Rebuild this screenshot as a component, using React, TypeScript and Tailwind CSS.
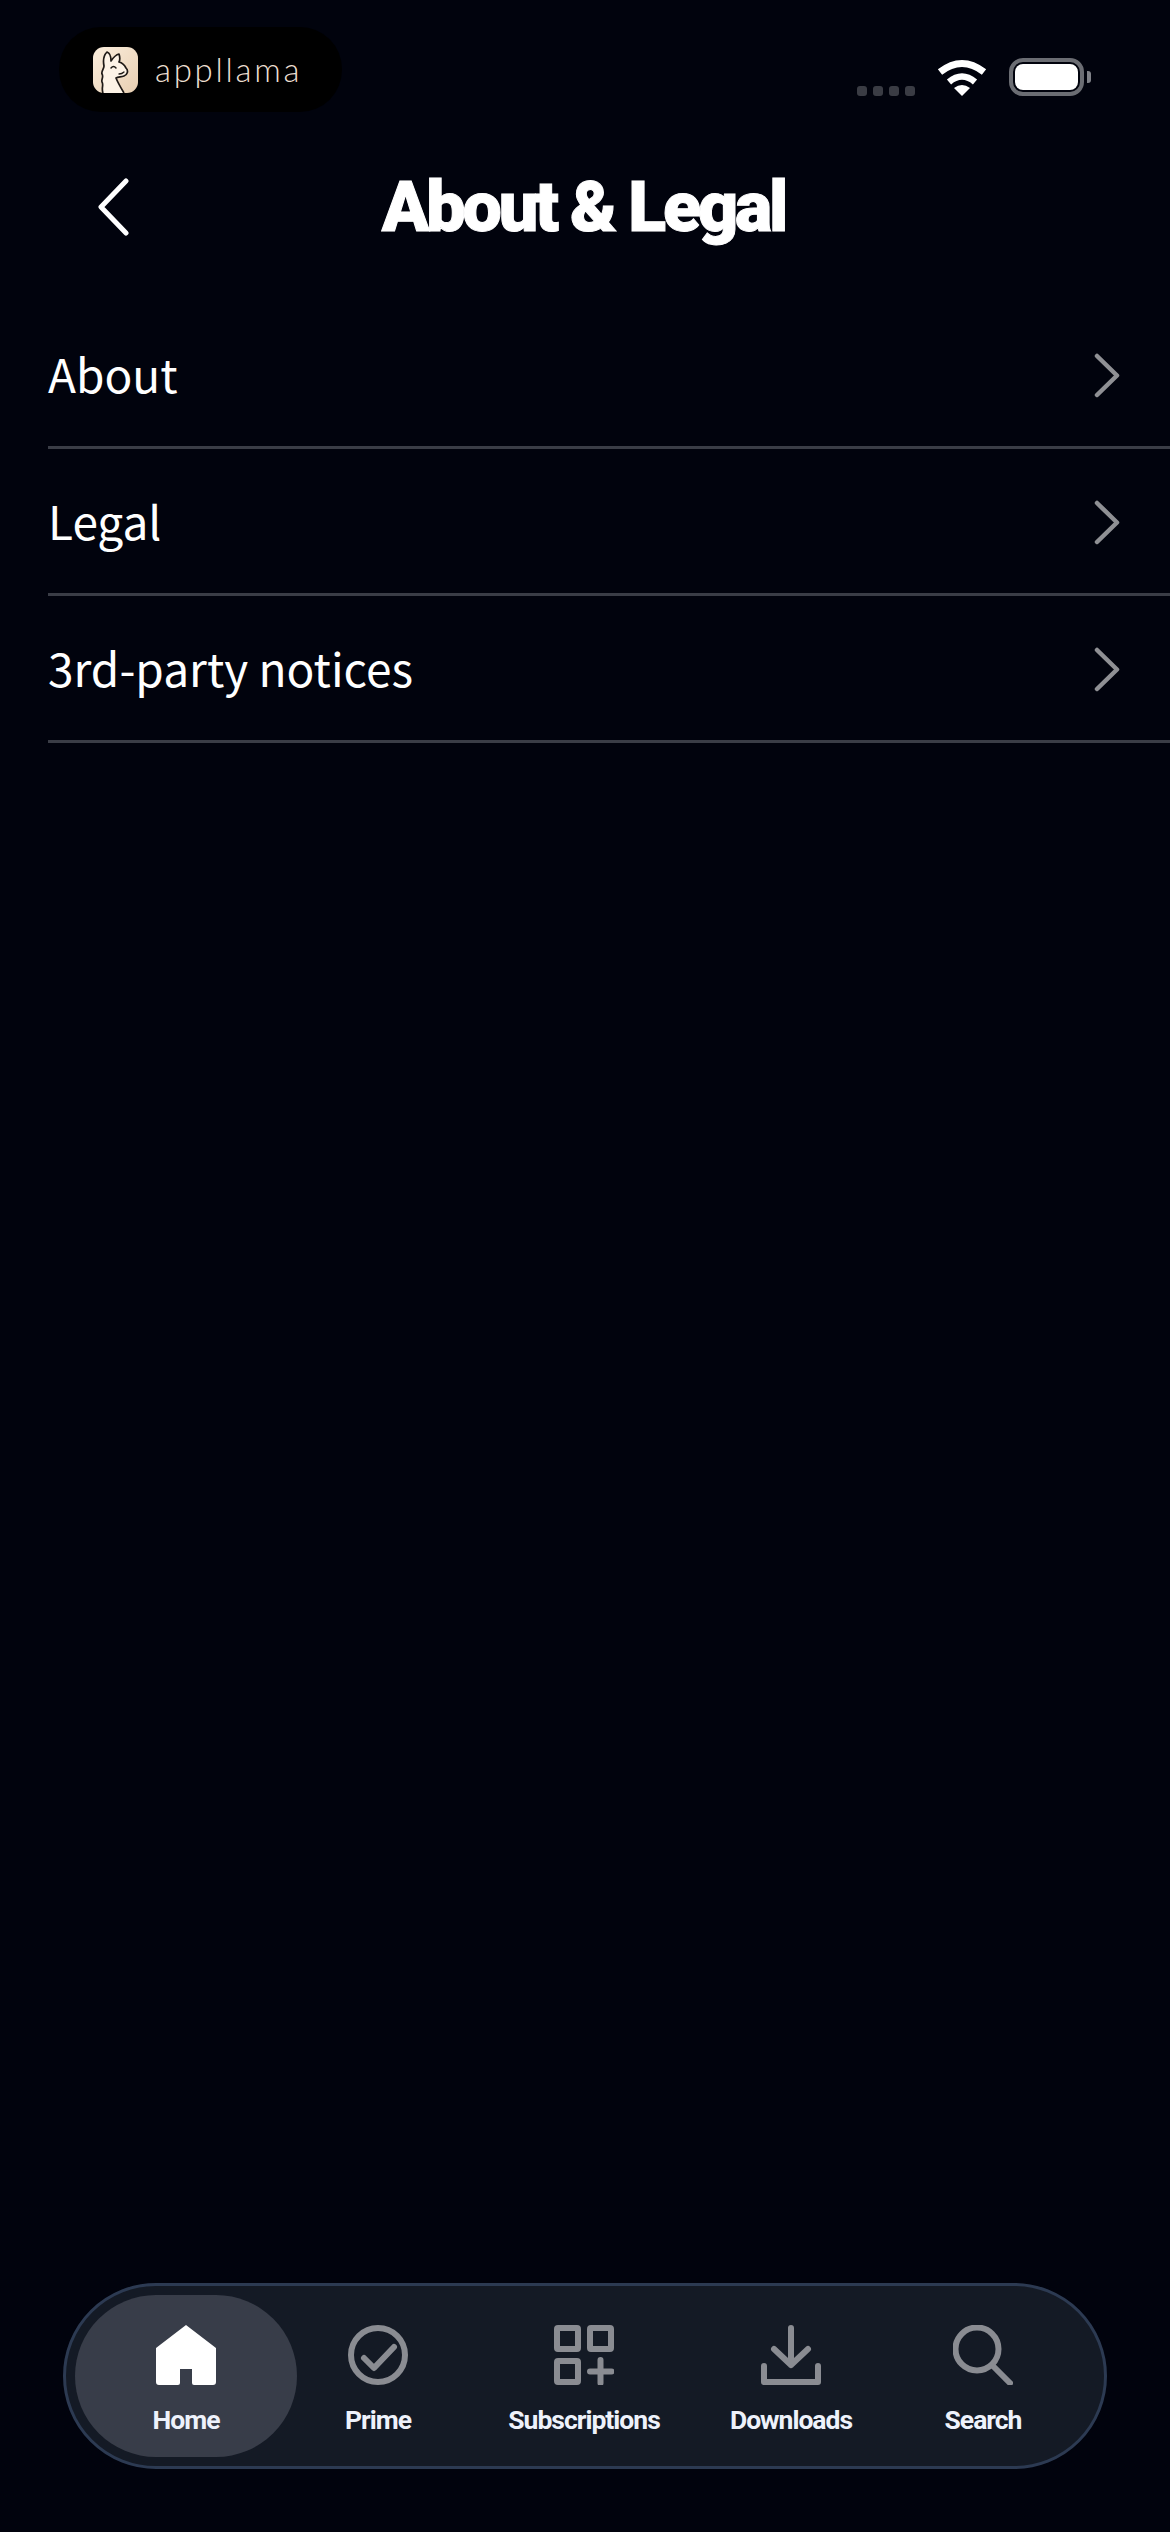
import React from "react";

const Chevron = () => (
  <svg width="26" height="45" viewBox="0 0 26 45" fill="none" className="block mt-[3px]">
    <path d="M3 3 L23 22.5 L3 42" stroke="#8f9094" strokeWidth="4.5" strokeLinecap="round" strokeLinejoin="round" />
  </svg>
);

const Row = ({ label }: { label: string }) => (
  <div className="ml-[48px] h-[147px] flex items-center justify-between border-b-[3px] border-[#3a3d46] pr-[50px]">
    <span className="text-[46px] leading-none text-white pb-[3px] font-['Noto_Sans_CJK_SC','Noto_Sans',sans-serif]">{label}</span>
    <Chevron />
  </div>
);

const Llama = () => (
  <svg width="45" height="46" viewBox="0 0 45 46" className="block shrink-0">
    <defs>
      <linearGradient id="lg" x1="0" y1="0" x2="1" y2="1">
        <stop offset="0" stopColor="#fbeedd" />
        <stop offset="1" stopColor="#e8cfb2" />
      </linearGradient>
    </defs>
    <rect width="45" height="46" rx="11" fill="url(#lg)" />
    <path
      d="M10 46 C8 41 11 38 9 35 C8 32 11 30 9 27 C8 24 11 22 11 19 C10 14 11 8 14 5 C17 6 18 11 18 14 C20 11 22 8 26 7 C27 10 27 13 26 15 C30 16 32 19 33 21 C36 24 34 28 31 29 C28 30 25 30 23 31 C25 36 28 41 31 46"
      fill="#fdf3e6"
      stroke="#1f1a16"
      strokeWidth="1.7"
      strokeLinejoin="round"
    />
    <path d="M18 21 Q20.5 18 23 21" fill="none" stroke="#1f1a16" strokeWidth="1.5" strokeLinecap="round" />
    <path d="M26 27 Q29 27 31 25" fill="none" stroke="#1f1a16" strokeWidth="1.3" strokeLinecap="round" />
  </svg>
);

const Wifi = () => (
  <svg width="50" height="37" viewBox="0 0 50 37" fill="none" className="block">
    <path d="M3 13 Q25 -4 47 13" stroke="#fff" strokeWidth="7" />
    <path d="M12 23 Q25 12 38 23" stroke="#fff" strokeWidth="6.5" />
    <path d="M17 29 Q25 23 33 29 L25 37 Z" fill="#fff" />
  </svg>
);

const Battery = () => (
  <div className="flex items-center">
    <div className="w-[75px] h-[38px] rounded-[14px] border-[4px] border-[#6b6d73] p-[2px]">
      <div className="w-full h-full rounded-[8px] bg-white" />
    </div>
    <div className="ml-[3px] w-[4px] h-[12px] rounded-r-[3px] bg-[#808288]" />
  </div>
);

const stroke = { stroke: "#8a8c92", strokeWidth: 6, fill: "none" };

const HomeIcon = () => (
  <svg width="60" height="60" viewBox="0 0 60 60" className="block">
    <path
      d="M30 0 L60 23 V57 Q60 60 57 60 H38 Q36 60 36 58 V44 H24 V58 Q24 60 22 60 H3 Q0 60 0 57 V23 Z"
      fill="#fff"
    />
  </svg>
);
const PrimeIcon = () => (
  <svg width="60" height="60" viewBox="0 0 60 60" className="block">
    <circle cx="30" cy="30" r="27" {...stroke} />
    <path d="M16 33 L26 43 L46 22" {...stroke} strokeLinecap="round" strokeLinejoin="round" />
  </svg>
);
const SubsIcon = () => (
  <svg width="60" height="60" viewBox="0 0 60 60" className="block">
    <rect x="3" y="3" width="21" height="21" rx="1" {...stroke} />
    <rect x="36" y="3" width="21" height="21" rx="1" {...stroke} />
    <rect x="3" y="36" width="21" height="21" rx="1" {...stroke} />
    <path d="M36 46.5 H57.5 M46.5 35 V58" {...stroke} strokeLinecap="round" />
  </svg>
);
const DownloadIcon = () => (
  <svg width="60" height="60" viewBox="0 0 60 60" className="block">
    <path d="M30 3 V40 M13 24 L30 40 L47 24" {...stroke} strokeLinecap="round" strokeLinejoin="round" />
    <path d="M3 41 V57 H57 V41" {...stroke} strokeLinecap="round" strokeLinejoin="round" />
  </svg>
);
const SearchIcon = () => (
  <svg width="60" height="60" viewBox="0 0 60 60" className="block">
    <circle cx="24" cy="24" r="21.5" {...stroke} />
    <path d="M40 41 L57 58" {...stroke} strokeLinecap="round" />
  </svg>
);

const NavItem = ({ width, label, active, children }: { width: string; label: string; active?: boolean; children: React.ReactNode }) => (
  <div className={`${width} h-[162px] flex flex-col items-center pt-[30px] shrink-0 ${active ? "bg-[#383d49] rounded-[81px]" : ""}`}>
    {children}
    <span className="mt-[20px] text-[26.5px] leading-[30px] font-bold tracking-[-1px] whitespace-nowrap text-[#eef2fb] font-['Roboto','Liberation_Sans',sans-serif]">{label}</span>
  </div>
);

export default function App() {
  return (
    <div className="w-[1170px] h-[2532px] bg-[#01030d] flex flex-col overflow-hidden">
      <div className="flex justify-between items-start pt-[27px] pl-[59px] pr-[79px]">
        <div className="w-[283px] h-[85px] rounded-[42px] bg-black flex items-center pl-[34px] gap-[17px]">
          <Llama />
          <span className="text-[33px] leading-none font-light tracking-[2.7px] text-[#ecdfd0] font-['Lato',sans-serif]">appllama</span>
        </div>
        <div className="flex items-end gap-[22px] pt-[31px]">
          <div className="flex gap-[6px]">
            <div className="w-[10px] h-[10px] rounded-[3px] bg-[#3a3c44]" />
            <div className="w-[10px] h-[10px] rounded-[3px] bg-[#3a3c44]" />
            <div className="w-[10px] h-[10px] rounded-[3px] bg-[#3a3c44]" />
            <div className="w-[10px] h-[10px] rounded-[3px] bg-[#3a3c44]" />
          </div>
          <Wifi />
          <Battery />
        </div>
      </div>

      <div className="h-[190px] grid grid-cols-[1fr_auto_1fr] items-center">
        <div className="pl-[97px]">
          <svg width="34" height="58" viewBox="0 0 34 58" fill="none" className="block">
            <path d="M29 3 L4 29 L29 55" stroke="#fff" strokeWidth="5" strokeLinecap="round" strokeLinejoin="round" />
          </svg>
        </div>
        <h1 className="text-[70px] leading-none font-black tracking-[-3.2px] text-white [-webkit-text-stroke:1px_white] font-['Roboto',sans-serif] pr-[3px]">About &amp; Legal</h1>
        <div />
      </div>

      <Row label="About" />
      <Row label="Legal" />
      <Row label="3rd-party notices" />

      <div className="mt-auto mb-[63px] mx-[63px] h-[186px] rounded-[93px] border-[3px] border-[#2c3a52] bg-[#141a25] flex items-center pl-[9px]">
        <NavItem width="w-[222px]" label="Home" active>
          <HomeIcon />
        </NavItem>
        <NavItem width="w-[162px]" label="Prime">
          <PrimeIcon />
        </NavItem>
        <NavItem width="w-[250px]" label="Subscriptions">
          <SubsIcon />
        </NavItem>
        <NavItem width="w-[164px]" label="Downloads">
          <DownloadIcon />
        </NavItem>
        <NavItem width="w-[220px]" label="Search">
          <SearchIcon />
        </NavItem>
      </div>
    </div>
  );
}
